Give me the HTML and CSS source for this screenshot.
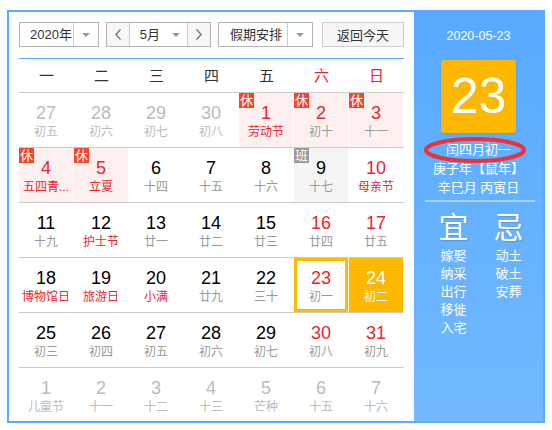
FILE: index.html
```html
<!DOCTYPE html>
<html lang="zh-CN">
<head>
<meta charset="utf-8">
<title>万年历</title>
<link rel="stylesheet" href="styles.css">
</head>
<body>
<div class="calendar">
  <div class="main">
    <div class="head">
      <div class="select year"><span class="sel-text">2020年</span><span class="sel-arrow"><i></i></span></div>
      <div class="month-group">
        <span class="nav"><svg width="6" height="11" viewBox="0 0 6 11"><polyline points="5.5,0.5 0.8,5.5 5.5,10.5" fill="none" stroke="#666" stroke-width="1.1"/></svg></span>
        <div class="month-sel"><span class="sel-text">5月</span><span class="m-arrow"><i></i></span></div>
        <span class="nav"><svg width="6" height="11" viewBox="0 0 6 11"><polyline points="0.5,0.5 5.2,5.5 0.5,10.5" fill="none" stroke="#666" stroke-width="1.1"/></svg></span>
      </div>
      <div class="select holiday"><span class="sel-text">假期安排</span><span class="sel-arrow"><i></i></span></div>
      <button class="today">返回今天</button>
    </div>
    <div class="week-head">
      <span>一</span><span>二</span><span>三</span><span>四</span><span>五</span><span class="red">六</span><span class="red">日</span>
    </div>
    <div class="grid">
      <div class="row">
        <div class="cell other"><b>27</b><em>初五</em></div>
        <div class="cell other"><b>28</b><em>初六</em></div>
        <div class="cell other"><b>29</b><em>初七</em></div>
        <div class="cell other"><b>30</b><em>初八</em></div>
        <div class="cell rest red"><span class="tag">休</span><b>1</b><em class="fest">劳动节</em></div>
        <div class="cell rest red"><span class="tag">休</span><b>2</b><em>初十</em></div>
        <div class="cell rest red"><span class="tag">休</span><b>3</b><em>十一</em></div>
      </div>
      <div class="row">
        <div class="cell rest red"><span class="tag">休</span><b>4</b><em class="fest">五四青...</em></div>
        <div class="cell rest red"><span class="tag">休</span><b>5</b><em class="fest">立夏</em></div>
        <div class="cell"><b>6</b><em>十四</em></div>
        <div class="cell"><b>7</b><em>十五</em></div>
        <div class="cell"><b>8</b><em>十六</em></div>
        <div class="cell work"><span class="tag">班</span><b>9</b><em>十七</em></div>
        <div class="cell red"><b>10</b><em class="fest">母亲节</em></div>
      </div>
      <div class="row">
        <div class="cell"><b>11</b><em>十九</em></div>
        <div class="cell"><b>12</b><em class="fest">护士节</em></div>
        <div class="cell"><b>13</b><em>廿一</em></div>
        <div class="cell"><b>14</b><em>廿二</em></div>
        <div class="cell"><b>15</b><em>廿三</em></div>
        <div class="cell red"><b>16</b><em>廿四</em></div>
        <div class="cell red"><b>17</b><em>廿五</em></div>
      </div>
      <div class="row">
        <div class="cell"><b>18</b><em class="fest">博物馆日</em></div>
        <div class="cell"><b>19</b><em class="fest">旅游日</em></div>
        <div class="cell"><b>20</b><em class="fest">小满</em></div>
        <div class="cell"><b>21</b><em>廿九</em></div>
        <div class="cell"><b>22</b><em>三十</em></div>
        <div class="cell red today-cell"><b>23</b><em>初一</em></div>
        <div class="cell picked"><b>24</b><em>初二</em></div>
      </div>
      <div class="row">
        <div class="cell"><b>25</b><em>初三</em></div>
        <div class="cell"><b>26</b><em>初四</em></div>
        <div class="cell"><b>27</b><em>初五</em></div>
        <div class="cell"><b>28</b><em>初六</em></div>
        <div class="cell"><b>29</b><em>初七</em></div>
        <div class="cell red"><b>30</b><em>初八</em></div>
        <div class="cell red"><b>31</b><em>初九</em></div>
      </div>
      <div class="row last">
        <div class="cell other"><b>1</b><em>儿童节</em></div>
        <div class="cell other"><b>2</b><em>十一</em></div>
        <div class="cell other"><b>3</b><em>十二</em></div>
        <div class="cell other"><b>4</b><em>十三</em></div>
        <div class="cell other"><b>5</b><em>芒种</em></div>
        <div class="cell other"><b>6</b><em>十五</em></div>
        <div class="cell other"><b>7</b><em>十六</em></div>
      </div>
    </div>
  </div>
  <div class="side">
    <div class="side-date">2020-05-23</div>
    <div class="big-day">23</div>
    <div class="lunar">
      <div>闰四月初一</div>
      <div>庚子年【鼠年】</div>
      <div>辛巳月 丙寅日</div>
    </div>
    <div class="divider"></div>
    <div class="yiji">
      <div class="col">
        <div class="yj-title">宜</div>
        <div>嫁娶</div><div>纳采</div><div>出行</div><div>移徙</div><div>入宅</div>
      </div>
      <div class="col">
        <div class="yj-title">忌</div>
        <div>动土</div><div>破土</div><div>安葬</div>
      </div>
    </div>
    <svg class="mark" width="110" height="34" viewBox="0 0 110 34"><ellipse cx="55" cy="17" rx="49" ry="11" fill="none" stroke="#ee3138" stroke-width="4"/></svg>
  </div>
</div>
</body>
</html>
```
FILE: styles.css
```css
* { box-sizing: border-box; }
body {
  margin: 0;
  background: #fff;
  font-family: "Liberation Sans", "Noto Sans CJK SC", sans-serif;
}
.calendar {
  margin: 10px 0 0 7px;
  width: 538px;
  height: 413px;
  border: 2px solid #5aabff;
  display: flex;
  overflow: hidden;
}
.main {
  width: 405px;
  padding: 10px 10px 0 10px;
  background: #fff;
}
.head {
  display: flex;
  padding-bottom: 11px;
  border-bottom: 1px solid #5aabff;
  box-sizing: content-box;
  height: 25px;
}
.select, .month-group {
  height: 25px;
  border: 1px solid #b4b4b4;
  display: flex;
  font-size: 13px;
  color: #333;
  background: #fff;
}
.sel-text {
  flex: 1;
  padding-left: 10px;
  line-height: 23px;
}
.sel-arrow {
  width: 25px;
  border-left: 1px solid #ccc;
  display: flex;
  align-items: center;
  justify-content: center;
}
.sel-arrow i, .m-arrow i {
  width: 0;
  height: 0;
  border-left: 4px solid transparent;
  border-right: 4px solid transparent;
  border-top: 4px solid #999;
}
.year { width: 80px; }
.month-group { width: 105px; margin-left: 7px; }
.nav {
  width: 22px;
  background: #f7f7f7;
  display: flex;
  align-items: center;
  justify-content: center;
}
.month-sel {
  width: 60px;
  display: flex;
  border-left: 1px solid #ccc;
  border-right: 1px solid #ccc;
}
.month-sel .sel-text { padding-left: 10px; }
.m-arrow {
  width: 22px;
  display: flex;
  align-items: center;
  justify-content: center;
}
.holiday { width: 95px; margin-left: 7px; }
.holiday .sel-text { padding-left: 11px; }
.today {
  margin-left: 9px;
  width: 82px;
  height: 25px;
  border: 1px solid #ccc;
  background: #f7f7f7;
  font: 13px "Liberation Sans", "Noto Sans CJK SC", sans-serif;
  color: #333;
  padding: 0;
}
.week-head {
  display: flex;
  height: 34px;
  border-bottom: 1px solid #ccc;
}
.week-head span {
  width: 55px;
  text-align: center;
  line-height: 33px;
  font-size: 15px;
  color: #333;
}
.week-head .red { color: #e8262f; }
.row {
  display: flex;
  height: 55px;
  border-bottom: 1px solid #ccc;
}
.row.last { border-bottom: none; }
.cell {
  position: relative;
  width: 54px;
  height: 54px;
  margin-right: 1px;
  text-align: center;
  padding: 10px 1px 0;
}
.cell b {
  display: block;
  font-weight: normal;
  font-size: 18px;
  line-height: 20px;
  color: #000;
}
.cell em {
  display: block;
  font-style: normal;
  font-size: 12px;
  line-height: 18px;
  color: #999;
  white-space: nowrap;
}
.cell.red b { color: #e8262f; }
.cell em.fest { color: #e8262f; }
.cell.other b, .cell.other em { color: #bbb; }
.cell.rest { background: #fff0f0; }
.cell.work { background: #f5f5f5; }
.tag {
  position: absolute;
  left: 0;
  top: 0;
  width: 15px;
  height: 15px;
  font-size: 13px;
  line-height: 15px;
  color: #fff;
  background: #f5442e;
}
.work .tag { background: #999; }
.today-cell {
  border: 3px solid #ffbb00;
  padding-top: 7px;
}
.picked { background: #ffb800; }
.picked b, .picked em { color: #fff; }
.side {
  position: relative;
  width: 129px;
  background: linear-gradient(#58aaff, #72b9ff);
  color: #fff;
  text-align: center;
}
.side-date {
  margin-top: 14px;
  font-size: 12.5px;
  line-height: 20px;
}
.big-day {
  margin: 14px auto 0;
  width: 75px;
  height: 73px;
  border-radius: 3px;
  background: #ffb800;
  font-size: 50px;
  line-height: 73px;
  box-shadow: 0 1px 3px rgba(0,0,0,0.12);
}
.lunar {
  margin-top: 7px;
  font-size: 13px;
  line-height: 19px;
}
.divider {
  margin: 3px 8px 0 11px;
  height: 2px;
  background: rgba(255,255,255,0.45);
}
.yiji {
  display: flex;
  padding-left: 12px;
  margin-top: 9px;
  font-size: 13px;
  line-height: 18px;
}
.col { width: 55px; }
.yj-title {
  font-size: 30px;
  line-height: 34px;
  margin-bottom: 2px;
  text-shadow: 1px 1px 1px rgba(0,0,0,0.15);
}
.mark {
  position: absolute;
  left: 6px;
  top: 121px;
}
```
